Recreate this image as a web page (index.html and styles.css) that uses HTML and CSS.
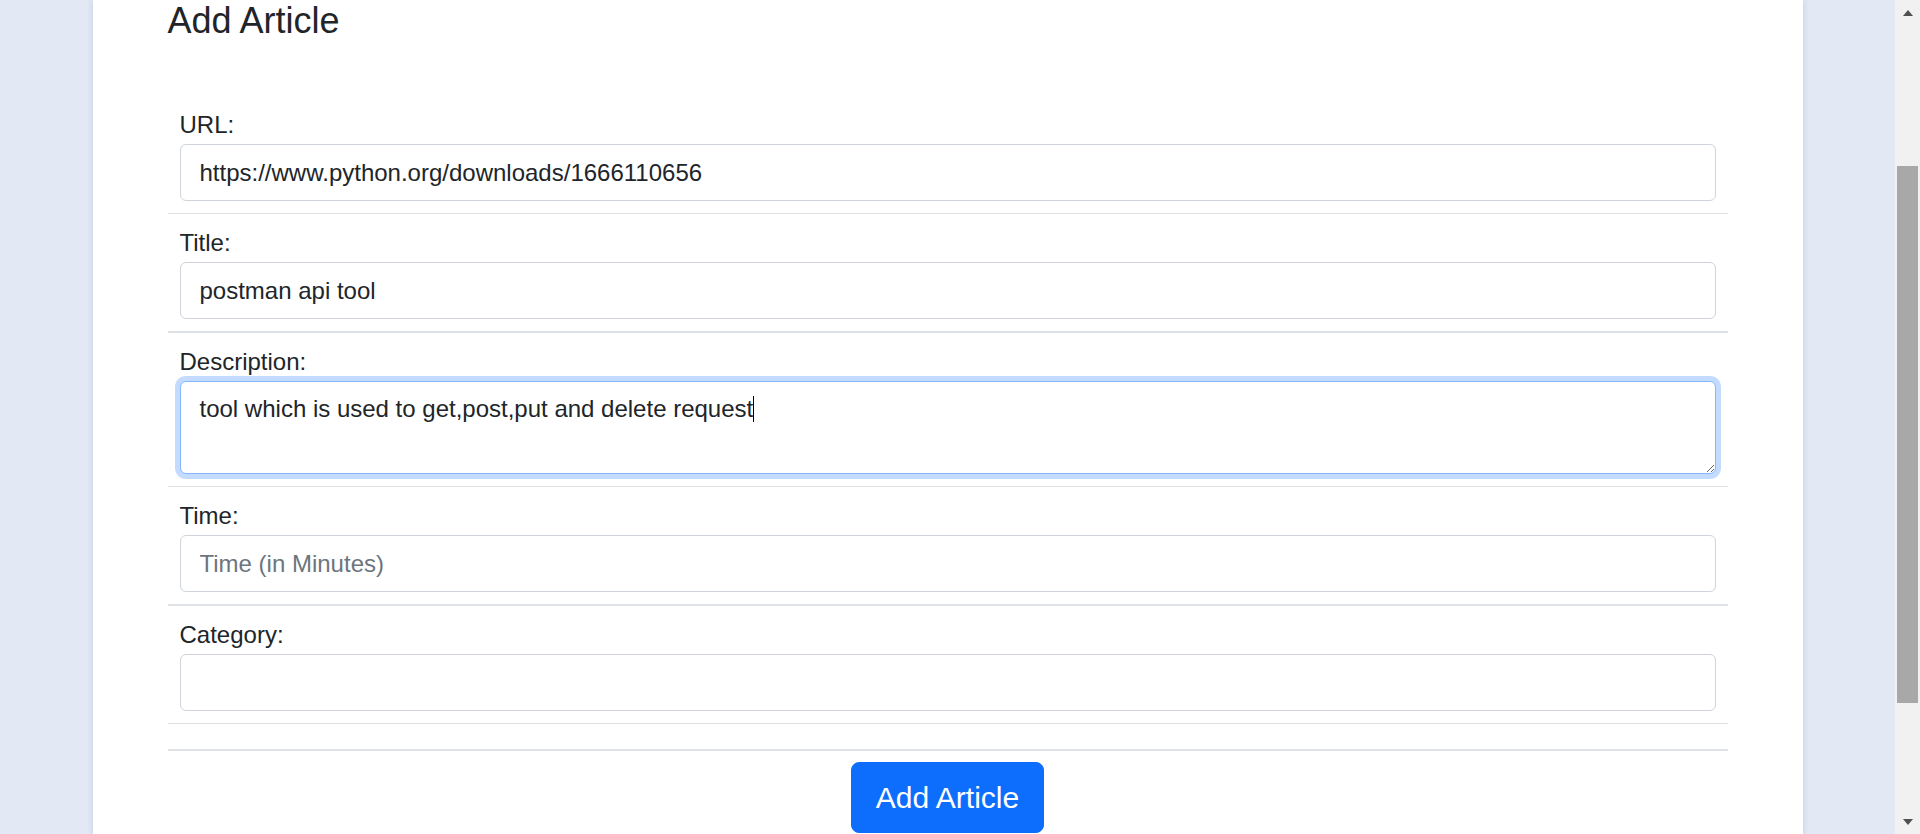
FILE: index.html
```html
<!DOCTYPE html>
<html lang="en">
<head>
<meta charset="utf-8">
<title>Add Article</title>
<link rel="stylesheet" href="styles.css">
</head>
<body>
<div class="page">
  <main class="viewport">
    <div class="card">
      <h3 class="title">Add Article</h3>
      <form class="form">
        <div class="row">
          <label class="label" for="url">URL:</label>
          <input class="field" id="url" type="text" value="https://www.python.org/downloads/1666110656">
        </div>
        <div class="row row-thick">
          <label class="label" for="title">Title:</label>
          <input class="field" id="title" type="text" value="postman api tool">
        </div>
        <div class="row">
          <label class="label" for="desc">Description:</label>
          <div class="area-wrap">
            <textarea class="field field-area is-focused" id="desc">tool which is used to get,post,put and delete request</textarea>
            <div class="caret-layer" aria-hidden="true"><span class="ghost">tool which is used to get,post,put and delete request</span><span class="caret"></span></div>
          </div>
        </div>
        <div class="row row-thick">
          <label class="label" for="time">Time:</label>
          <input class="field" id="time" type="text" placeholder="Time (in Minutes)">
        </div>
        <div class="row">
          <label class="label" for="cat">Category:</label>
          <input class="field" id="cat" type="text">
        </div>
        <div class="row row-empty row-thick"></div>
        <div class="actions">
          <button class="btn" type="button">Add Article</button>
        </div>
      </form>
    </div>
  </main>
  <div class="scrollbar">
    <div class="sb-btn"><span class="tri tri-up"></span></div>
    <div class="sb-track"><div class="sb-thumb"></div></div>
    <div class="sb-btn"><span class="tri tri-down"></span></div>
  </div>
</div>
</body>
</html>
```
FILE: styles.css
```css
html, body {
  margin: 0;
  padding: 0;
  height: 100%;
  overflow: hidden;
}

body {
  font-family: "Liberation Sans", Arial, sans-serif;
  color: #212529;
  background: #e2e8f4;
}

.page {
  display: flex;
  height: 834px;
}

.viewport {
  flex: 1;
  display: flex;
  justify-content: center;
  min-width: 0;
}

.card {
  width: 1710px;
  box-sizing: border-box;
  padding: 0 75px;
  background: #fff;
  box-shadow: 0 0 6px rgba(40, 60, 120, 0.16);
}

.title {
  margin: 0;
  font-size: 36px;
  font-weight: 400;
  line-height: 42px;
}

.form {
  margin-top: 54px;
}

.row {
  padding: 12px 12px;
  border-bottom: 1px solid #dee2e6;
}

.row-thick {
  border-bottom-width: 2px;
}

.row-empty {
  padding: 0;
  height: 25px;
}

.label {
  display: block;
  font-size: 24px;
  line-height: 34px;
  margin-bottom: 2px;
}

.field {
  display: block;
  width: 100%;
  box-sizing: border-box;
  height: 57px;
  padding: 0 19px;
  font-family: "Liberation Sans", Arial, sans-serif;
  font-size: 24px;
  color: #212529;
  background: #fff;
  border: 1px solid #ced4da;
  border-radius: 6px;
  outline: none;
  margin: 0;
}

.field::placeholder {
  color: #6c757d;
  opacity: 1;
}

.area-wrap {
  position: relative;
}

.field-area {
  height: 93px;
  padding: 10px 19px;
  line-height: 1.45;
  resize: vertical;
}

.is-focused {
  border-color: #86b7fe;
  box-shadow: 0 0 0 5px rgba(13, 110, 253, 0.25);
}

.caret-layer {
  position: absolute;
  top: 0;
  left: 0;
  right: 0;
  padding: 11px 20px;
  font-size: 24px;
  line-height: 1.45;
  color: transparent;
  pointer-events: none;
  white-space: pre-wrap;
}

.caret {
  display: inline-block;
  width: 1px;
  height: 26px;
  background: #000;
  vertical-align: -5px;
}

.actions {
  display: flex;
  justify-content: center;
  padding-top: 11px;
}

.btn {
  font-family: "Liberation Sans", Arial, sans-serif;
  font-size: 30px;
  line-height: 45px;
  padding: 12px 24px;
  color: #fff;
  background: #0d6efd;
  border: 1px solid #0d6efd;
  border-radius: 8px;
}

.scrollbar {
  width: 25px;
  flex: none;
  display: flex;
  flex-direction: column;
  background: #f1f1f1;
}

.sb-btn {
  height: 25px;
  flex: none;
  display: flex;
  align-items: center;
  justify-content: center;
}

.sb-track {
  flex: 1;
  padding: 0 2px;
}

.sb-thumb {
  margin-top: 141px;
  height: 537px;
  background: #a8a8a8;
}

.tri {
  width: 0;
  height: 0;
  border-left: 5.5px solid transparent;
  border-right: 5.5px solid transparent;
}

.tri-up {
  border-bottom: 6px solid #505050;
}

.tri-down {
  border-top: 6px solid #505050;
}
```
